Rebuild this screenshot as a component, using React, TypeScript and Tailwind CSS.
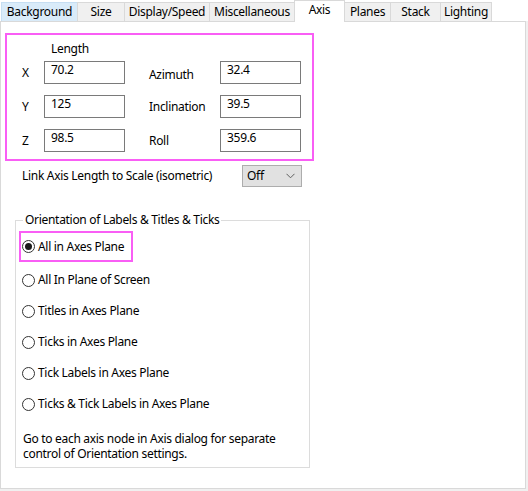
import React from "react";

const tabs = [
  { label: "Background", cls: "w-[76px] border-l border-t bg-[#d9ebf9] border-[#c6def2]" },
  { label: "Size", cls: "w-[47px] border-l border-t bg-[#f0f0f0] border-[#d9d9d9]" },
  { label: "Display/Speed", cls: "w-[85px] border-l border-t bg-[#f0f0f0] border-[#d9d9d9]" },
  { label: "Miscellaneous", cls: "w-[85px] border-l border-t bg-[#f0f0f0] border-[#d9d9d9]" },
];
const tabsAfter = [
  { label: "Planes", cls: "w-[45px] border-t bg-[#f0f0f0] border-[#d9d9d9]" },
  { label: "Stack", cls: "w-[50px] border-l border-t bg-[#f0f0f0] border-[#d9d9d9]" },
  { label: "Lighting", cls: "w-[52px] border-l border-t border-r bg-[#f0f0f0] border-[#d9d9d9]" },
];

function Tab({ label, cls }: { label: string; cls: string }) {
  return (
    <div className={`h-[19px] flex items-center justify-center ${cls}`}>
      <span className="leading-[16px]">{label}</span>
    </div>
  );
}

function Field({ value }: { value: string }) {
  return (
    <div className="w-[81px] h-[23px] border border-[#7a7a7a] bg-white pl-[6px] leading-[15px]">
      {value}
    </div>
  );
}

function Radio({ label, checked }: { label: string; checked?: boolean }) {
  return (
    <div className="flex items-center h-[16px]">
      <div className="w-[13px] h-[13px] rounded-full border border-[#333333] bg-white flex items-center justify-center">
        {checked && <div className="w-[7px] h-[7px] rounded-full bg-[#1a1a1a]" />}
      </div>
      <span className="ml-[3px]">{label}</span>
    </div>
  );
}

export default function App() {
  const rows = [
    { l: "X", v: "70.2", r: "Azimuth", rv: "32.4" },
    { l: "Y", v: "125", r: "Inclination", rv: "39.5" },
    { l: "Z", v: "98.5", r: "Roll", rv: "359.6" },
  ];
  return (
    <div className="w-[528px] h-[491px] bg-[#f0f0f0] text-black text-[12px] leading-[16px] tracking-[-0.3px] font-['Noto_Sans','DejaVu_Sans',sans-serif] overflow-hidden">
      <div className="h-[21px] bg-white flex items-end pl-[1px] relative z-10">
        {tabs.map((t) => (
          <Tab key={t.label} {...t} />
        ))}
        <div className="w-[51px] h-[22px] -mb-[1px] bg-white border-l border-t border-r border-[#d9d9d9] flex justify-center pt-[1px]">
          <span className="leading-[16px]">Axis</span>
        </div>
        {tabsAfter.map((t) => (
          <Tab key={t.label} {...t} />
        ))}
      </div>
      <div className="w-[526px] h-[468px] bg-white border border-[#d9d9d9] flex flex-col">
        <div className="ml-[4px] mt-[11px] w-[309px] h-[128px] border-2 border-[#f95ef5] flex flex-col pt-[6px]">
          <div className="pl-[44px] leading-[16px]">Length</div>
          <div className="flex flex-col gap-[11px] mt-[4px]">
            {rows.map((r) => (
              <div key={r.l} className="flex items-center h-[23px]">
                <div className="w-[37px] pl-[15px]">{r.l}</div>
                <Field value={r.v} />
                <div className={`w-[95px] pl-[24px] ${r.l === "X" ? "mt-[4px]" : ""}`}>{r.r}</div>
                <Field value={r.rv} />
              </div>
            ))}
          </div>
        </div>
        <div className="flex items-center mt-[4px] h-[22px]">
          <div className="w-[241px] pl-[21px]">Link Axis Length to Scale (isometric)</div>
          <div className="w-[60px] h-[22px] bg-[#e1e1e1] border border-[#adadad] flex items-center justify-between pl-[4px] pr-[6px]">
            <span>Off</span>
            <svg width="9" height="6" viewBox="0 0 9 6">
              <path d="M0.5 0.8 L4.5 4.8 L8.5 0.8" fill="none" stroke="#606060" strokeWidth="1" />
            </svg>
          </div>
        </div>
        <fieldset className="ml-[14px] mt-[25px] w-[295px] border border-[#dcdcdc] pb-[6px]">
          <legend className="ml-[7px] px-[2px] leading-[16px]">Orientation of Labels &amp; Titles &amp; Ticks</legend>
          <div className="flex flex-col">
            <div className="ml-[3px] mt-[3px] w-[114px] h-[31px] border-2 border-[#f95ef5] flex items-center pl-[1px]">
              <Radio label="All in Axes Plane" checked />
            </div>
            <div className="flex flex-col gap-[15px] mt-[10px] ml-[6px]">
              <Radio label="All In Plane of Screen" />
              <Radio label="Titles in Axes Plane" />
              <Radio label="Ticks in Axes Plane" />
              <Radio label="Tick Labels in Axes Plane" />
              <Radio label="Ticks & Tick Labels in Axes Plane" />
            </div>
            <div className="ml-[7px] mt-[19px] leading-[15px]">
              <div>Go to each axis node in Axis dialog for separate</div>
              <div>control of Orientation settings.</div>
            </div>
          </div>
        </fieldset>
      </div>
    </div>
  );
}
